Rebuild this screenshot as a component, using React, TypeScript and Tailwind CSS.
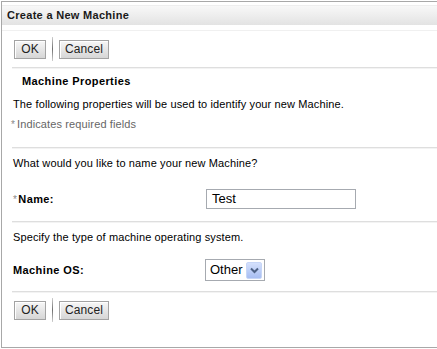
import React from "react";

const font = { fontFamily: '"Liberation Sans", Arial, sans-serif' };

function XpButton({ label, width }: { label: string; width: string }) {
  return (
    <button
      className={`${width} h-[19px] border border-[#a3a3a3] bg-gradient-to-b from-[#f7f7f7] to-[#d6d6d6] text-[12px] leading-none text-[#222] shadow-[inset_1px_1px_0_#ffffff]`}
    >
      {label}
    </button>
  );
}

function ButtonBar() {
  return (
    <div className="flex h-[24px] items-center pl-[12px]">
      <XpButton label="OK" width="w-[32px]" />
      <div className="mx-[6px] h-[24px] w-px bg-gradient-to-b from-[#d0d0d0] via-[#707070] to-[#d0d0d0]" />
      <XpButton label="Cancel" width="w-[50px]" />
    </div>
  );
}

function Separator({ className }: { className: string }) {
  return (
    <div className={`ml-[10px] ${className}`}>
      <div className="h-px bg-[#dedede]" />
      <div className="h-px bg-[#f3f3f3]" />
    </div>
  );
}

export default function App() {
  return (
    <div className="h-[349px] w-[437px] overflow-hidden bg-white text-[11px] tracking-[0.12px] text-black" style={font}>
      <div className="ml-[1px] mt-[1px] h-[347px] border-b border-l border-t border-[#a8a8a8]">
        <div className="h-[4px] border-b border-[#eeeeee]" />
        <div className="flex h-[19px] items-center bg-gradient-to-b from-[#f8f8f8] to-[#e3e3e3] pl-[5px] text-[11px] font-bold tracking-[0.3px] text-[#1a1a1a]">
          Create a New Machine
        </div>
        <div className="h-px bg-[#f0f0f0] mt-[5px]" />

        <div className="mt-[6px]">
          <ButtonBar />
        </div>

        <Separator className="mt-[6px]" />

        <div className="mt-[6px] flex h-[13px] items-center pl-[20px] font-bold tracking-[0.4px]">Machine Properties</div>
        <div className="mt-[10px] flex h-[13px] items-center pl-[11px]">
          The following properties will be used to identify your new Machine.
        </div>
        <div className="mt-[7px] flex h-[13px] items-center pl-[9px] text-[#666]">
          <span className="mr-[2px] text-[10px] text-[#888]">*</span>Indicates required fields
        </div>

        <Separator className="mt-[16px]" />

        <div className="mt-[8px] flex h-[13px] items-center pl-[11px]">
          What would you like to name your new Machine?
        </div>
        <div className="mt-[19px] flex h-[20px] items-center">
          <div className="flex w-[204px] items-center pl-[11px] font-bold tracking-[0.4px]">
            <span className="mr-[1px] text-[10px] font-normal text-[#888]">*</span>Name:
          </div>
          <div className="flex h-[20px] w-[150px] items-center border border-[#a6aab0] pl-[5px] text-[13px] tracking-normal">
            Test
          </div>
        </div>

        <Separator className="mt-[12px]" />

        <div className="mt-[8px] flex h-[13px] items-center pl-[11px]">
          Specify the type of machine operating system.
        </div>
        <div className="mt-[15px] flex h-[22px] items-center">
          <div className="w-[203px] pl-[11px] font-bold tracking-[0.4px]">Machine OS:</div>
          <div className="flex h-[22px] w-[60px] items-center justify-between border border-[#a6aab0] pl-[4px] pr-[2px] text-[13px] tracking-normal">
            Other
            <div className="flex h-[17px] w-[16px] items-center justify-center rounded-[2px] border border-[#c7d6f7] bg-gradient-to-b from-[#d4e0fc] to-[#a8bef2]">
              <svg width="9" height="7" viewBox="0 0 9 7">
                <path d="M1 1.5 L4.5 5 L8 1.5" fill="none" stroke="#4d6185" strokeWidth="2" />
              </svg>
            </div>
          </div>
        </div>

        <Separator className="mt-[10px]" />

        <div className="mt-[5px]">
          <ButtonBar />
        </div>
      </div>
    </div>
  );
}
